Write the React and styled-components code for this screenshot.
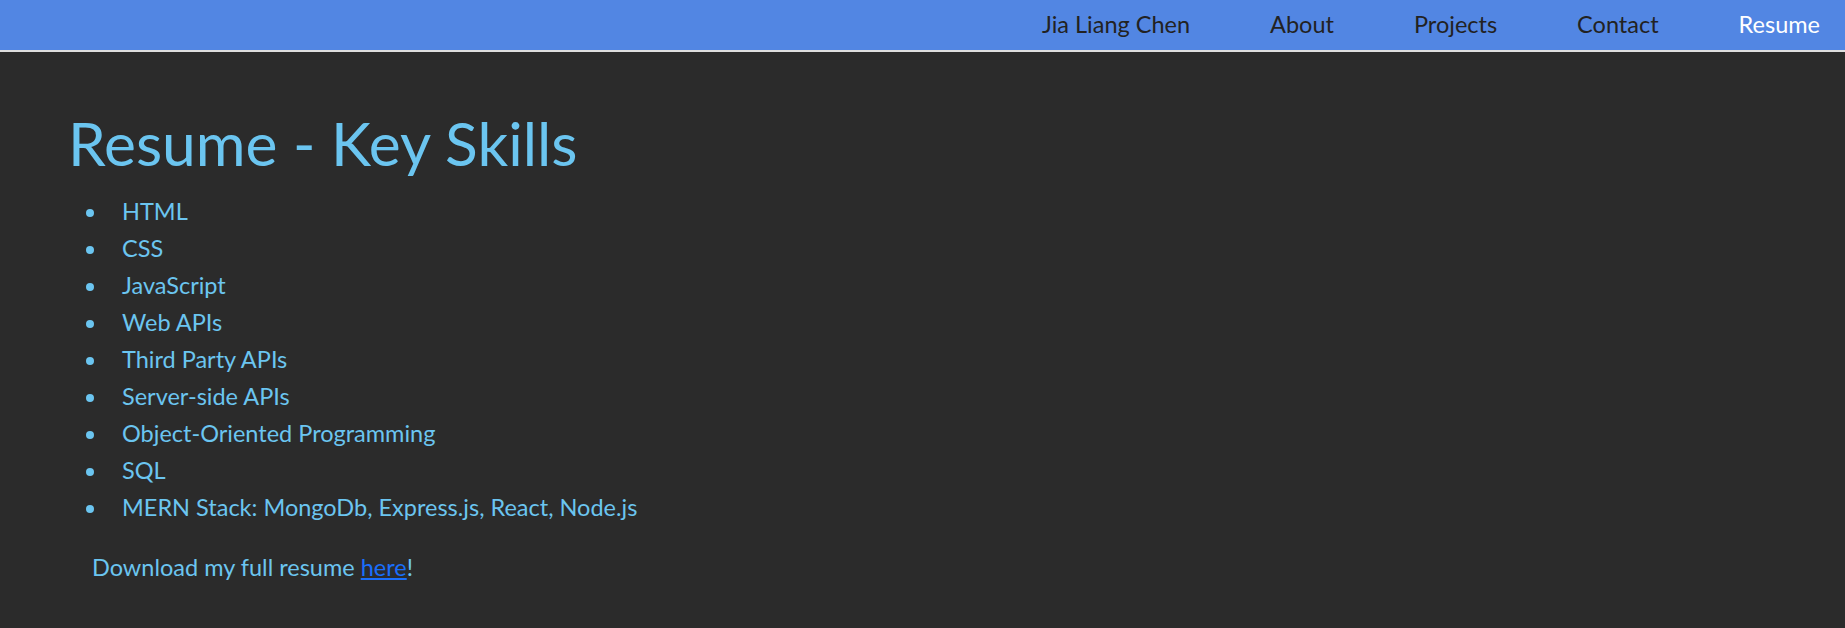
import React from 'react';
import styled, { createGlobalStyle } from 'styled-components';

const skills = [
  'HTML',
  'CSS',
  'JavaScript',
  'Web APIs',
  'Third Party APIs',
  'Server-side APIs',
  'Object-Oriented Programming',
  'SQL',
  'MERN Stack: MongoDb, Express.js, React, Node.js',
];

const links = ['Jia Liang Chen', 'About', 'Projects', 'Contact', 'Resume'];

const App = () => {
  return (
    <Page>
      <GlobalStyle />
      <Navbar>
        {links.map((l) => (
          <NavLink key={l} href="#" $active={l === 'Resume'}>{l}</NavLink>
        ))}
      </Navbar>
      <Main>
        <Title>Resume - Key Skills</Title>
        <SkillList>
          {skills.map((s) => (
            <Skill key={s}>{s}</Skill>
          ))}
        </SkillList>
        <Download>
          Download my full resume <DownloadLink href="#">here</DownloadLink>!
        </Download>
      </Main>
    </Page>
  );
};

const GlobalStyle = createGlobalStyle`
  body {
    margin: 0;
    background: #2b2b2b;
    font-family: Lato, "Noto Sans", sans-serif;
  }
`;

const Page = styled.div`
  min-height: 628px;
`;

const Navbar = styled.nav`
  height: 52px;
  box-sizing: border-box;
  padding: 0 25px 2px 0;
  display: flex;
  justify-content: flex-end;
  align-items: center;
  gap: 80px;
  background: #5286e3;
  border-bottom: 2px solid #dedede;
`;

const NavLink = styled.a`
  font-size: 23.5px;
  color: ${(p) => (p.$active ? '#ffffff' : '#222222')};
  text-decoration: none;
`;

const Main = styled.main`
  padding: 55px 0 0 68px;
`;

const Title = styled.h1`
  margin: 0 0 14px;
  font-size: 60.5px;
  line-height: 72px;
  font-weight: 400;
  color: #6bc5f0;
`;

const SkillList = styled.ul`
  margin: 0;
  padding: 0;
  list-style: none;
  color: #6bc5f0;
`;

const Skill = styled.li`
  display: flex;
  align-items: flex-start;
  font-size: 23.5px;
  line-height: 37px;

  &::before {
    content: '';
    flex: none;
    width: 8px;
    height: 8px;
    margin: 16px 28px 0 18px;
    border-radius: 50%;
    background: currentColor;
  }
`;

const Download = styled.p`
  margin: 23px 0 0 24px;
  font-size: 23.5px;
  line-height: 37px;
  color: #6bc5f0;
`;

const DownloadLink = styled.a`
  color: #1a6efb;
`;

export default App;
